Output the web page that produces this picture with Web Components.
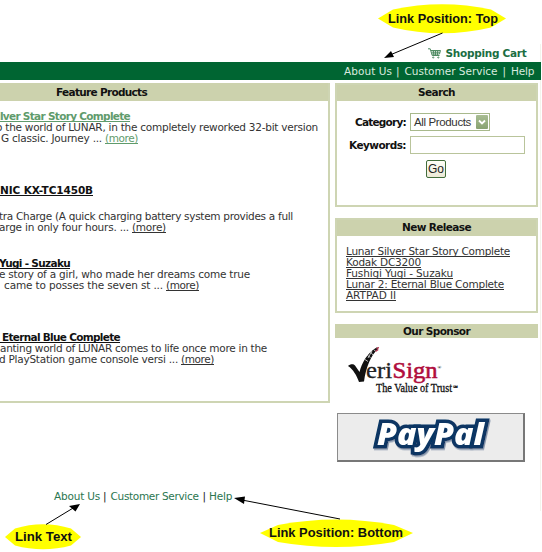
<!DOCTYPE html>
<html lang="en"><head><meta charset="utf-8"><title>Store</title>
<style>body{margin:0;background:#fff;overflow:hidden}</style></head><body>
<store-page></store-page>
<script>
const define=(name,html,after)=>customElements.define(name,class extends HTMLElement{
  connectedCallback(){
    if(this.shadowRoot)return;
    const t=document.createElement('template');t.innerHTML=html;
    this.attachShadow({mode:'open'}).append(t.content.cloneNode(true));
    if(after)after(this);
  }
});
// A run of text whose tracking is adjusted to fill width "w"; "x" is its leading space.
define('text-run',`<style>:host{display:block;flex:none;white-space:pre;line-height:inherit}
:host([b]){font-weight:bold;font-size:10.5px}:host([u]) span{text-decoration:underline;text-underline-offset:1px;text-decoration-thickness:1px;text-decoration-skip-ink:none}
span{display:inline-block}</style><span><slot></slot></span>`,el=>{
  const s=el.shadowRoot.querySelector('span'),x=el.getAttribute('x'),w=+el.getAttribute('w');
  if(x)el.style.marginLeft=x+'px';
  if(w){const n=el.textContent.length,cw=s.getBoundingClientRect().width;
    s.style.letterSpacing=((w-cw)/n)+'px';el.style.width=w+'px';}
});
define('text-line',`<style>:host{display:flex;height:11px;line-height:11px}</style><slot></slot>`);
define('product-item',`<style>:host{display:block}</style><slot></slot>`);
define('side-panel',`<style>:host{display:flex;flex-direction:column;box-sizing:border-box;border:2px solid #ced5b3;background:#fff}
header{background:#ccd2ad;height:16px;line-height:15px;font-weight:bold;color:#111;display:flex;justify-content:center;flex:none}
:host([flat]){border-width:0}:host([flat]) header{height:14px}</style>
<header><slot name="title"></slot></header><slot></slot>`);
define('cart-icon',`<style>:host{display:block;width:13px;height:11px}svg{display:block}</style>
<svg width="13" height="11" fill="none" stroke="#4f8b63" stroke-width="1"><path d="M0 .8h2.2l2 6.7h7.3M2.8 2.5h9.7l-1 3.5H4M5.3 2.5l.6 5M7.5 2.5v5M9.7 2.5l-.3 5M3.4 4.2H12"/><circle cx="5.2" cy="9.5" r=".6"/><circle cx="10.3" cy="9.5" r=".6"/></svg>`);
define('search-form',`<style>:host{display:grid;grid-template-columns:73px 116px;row-gap:5px;padding-top:12px;color:#111}
.l{display:flex;justify-content:flex-end;padding-right:4px;height:18px;line-height:18px}
.s{box-sizing:border-box;width:80px;height:18px;border:1px solid #a8b98c;display:flex;font:11.5px/16px "Liberation Sans",sans-serif;color:#333}
.s i{display:block;box-sizing:border-box;margin:1px 1px 0 auto;border-radius:1px;width:12px;height:14px;background:linear-gradient(#a9bd93,#87a271);flex:none}
svg{display:block}.k{box-sizing:border-box;width:115px;height:18px;border:1px solid #b9c49b}
button{grid-column:1/3;margin:1px 0 0 89px;box-sizing:border-box;width:20px;height:18px;padding:0;border:1px solid #426d3b;border-radius:2px;background:linear-gradient(#fffff8,#ece9d6);color:#222;font:12px/15px "Liberation Sans",sans-serif}</style>
<div class="l"><text-run b w="51">Category:</text-run></div><div class="s"><text-run x="3" w="57">All Products</text-run><i><svg width="12" height="14"><path d="M3 5.5l3 3 3-3" fill="none" stroke="#fff" stroke-width="1.8"/></svg></i></div>
<div class="l"><text-run b w="57">Keywords:</text-run></div><div class="k"></div><button>Go</button>`);
define('verisign-logo',`<style>:host{display:block;height:52px}svg{display:block}</style>
<svg width="140" height="52" font-family="Liberation Serif,serif"><path d="M13 19C15 17 18.500 16.500 20 18.500L24.500 25C27 16 32 6 42 .3L43.500 1.500C36 8 31 20 29 34.500L24 35C22 29 18 22 13 19Z" fill="#111"/>
<path d="M38.500 2.500L41.500 5M35.500 5L38 8M32.500 8.500L35.500 10.500M30 12.500L33 14.500M37 4L33 11" stroke="#fff" stroke-width=".7"/><path d="M41.500 2L43.800.2M40.500 4.500L43.300 2.500" stroke="#b83350" stroke-width="1.2"/>
<text x="31" y="31" font-size="23" textLength="26" lengthAdjust="spacingAndGlyphs" fill="#222" stroke="#222" stroke-width=".3">eri</text><text x="57.500" y="31" font-size="24" textLength="45" lengthAdjust="spacingAndGlyphs" fill="#b00d3d" stroke="#b00d3d" stroke-width=".6">Sign</text><text x="102.500" y="22" font-size="5" font-weight="bold">®</text>
<text x="41" y="45" font-size="11.5" textLength="76" lengthAdjust="spacingAndGlyphs" fill="#111" stroke="#111" stroke-width=".3">The Value of Trust</text><text x="117.500" y="43" font-size="6" font-weight="bold">℠</text></svg>`);
define('paypal-logo',`<style>:host{display:block;box-sizing:border-box;width:188px;height:49px;border:1px solid #8b8b8b;border-right:2px solid #777;border-bottom:2px solid #777;background:#ececec}svg{display:block}</style>
<svg width="185" height="46" font-family="Open Sans,Noto Sans,sans-serif" font-weight="800" font-style="italic" font-size="30"><defs><filter id="sh"><feDropShadow dx="1" dy="1.500" stdDeviation=".6" flood-color="#8998ad"/></filter></defs><text x="39" y="31" textLength="107" lengthAdjust="spacingAndGlyphs" fill="#fff" stroke="#073563" stroke-width="7" paint-order="stroke" filter="url(#sh)">PayPal</text></svg>`);
define('call-outs',`<style>:host{position:absolute;inset:0;pointer-events:none}svg{display:block}</style>
<svg width="542" height="552" font-family="Liberation Sans,sans-serif" font-weight="bold" font-size="13.5"><g fill="#ff0">
<path d="M378 18.5L393 9.500Q442-1 491 9.500L506 18.500 491 27.500Q442 39 393 27.500Z"/>
<path d="M5 537L15 528.500Q43 520 71 528.500L81 537 71 545.500Q43 553 15 545.500Z"/>
<path d="M260 533L278 525Q336 514 394 525L413 533 394 542Q336 552 278 542Z"/></g>
<g stroke="#000"><path d="M442.500 33L390 55M46 524.500L74 507.500M340 519L242 500"/></g>
<path d="M384 58L391 51 394 57ZM80 504L75.500 511.500 69 506ZM234 498L245 496.500 244 504Z"/>
<g fill="#111"><text x="388" y="23" textLength="110" lengthAdjust="spacingAndGlyphs">Link Position: Top</text><text x="15" y="541" textLength="57" lengthAdjust="spacingAndGlyphs">Link Text</text><text x="269" y="537" textLength="134" lengthAdjust="spacingAndGlyphs">Link Position: Bottom</text></g></svg>`);
define('store-page',`<style>
:host{display:block;position:relative;width:542px;height:552px;overflow:hidden;font:10.5px/11px "DejaVu Sans",Verdana,sans-serif;color:#333}
.page{box-sizing:border-box;width:541px;height:511px;padding-top:44px;background:linear-gradient(#f3f4ec,#f3f4ec) 540px 44px/1px 467px no-repeat}
.cart{display:flex;height:18px;padding:3px 0 0 428px;box-sizing:border-box;color:#1b6e42;line-height:13px;gap:4.5px}
cart-icon{margin-top:1px}
nav{display:flex;height:18px;line-height:19px;background:#006532;color:#d8eadf}
.cols{display:flex;margin-top:3px;height:380px}
.main{box-sizing:border-box;width:330px;height:320px;border-right:2px solid #ced5b3;border-bottom:2px solid #ced5b3;overflow:hidden}
.main h2{margin:0 -2px 0 0;height:18px;background:#ccd2ad;font-size:11px;line-height:19px;color:#111}
aside{width:203px;margin-left:5px}
.items{padding-top:10px}
product-item{margin-bottom:41px}product-item.b{margin-bottom:25px}
.gap{height:15px}.t{color:#111}.g{color:#5f9b6c}
.foot{display:flex;height:14px;line-height:14px;margin-top:26px;color:#2b7650}.k{color:#222}
</style>
<div class="page">
<div class="cart"><cart-icon></cart-icon><text-run b w="81">Shopping Cart</text-run></div>
<nav><text-run x="344" w="48">About Us</text-run><text-run x="4">|</text-run><text-run x="5" w="93">Customer Service</text-run><text-run x="5">|</text-run><text-run x="5" w="23">Help</text-run></nav>
<div class="cols">
<section class="main"><h2><text-run b x="56" w="91">Feature Products</text-run></h2>
<div class="items">
<product-item><text-line class="g"><text-run b u x="-3" w="133">ilver Star Story Complete</text-run></text-line><text-line><text-run x="-4" w="322">o the world of LUNAR, in the completely reworked 32-bit version</text-run></text-line><text-line><text-run x="1" w="101">G classic. Journey ...</text-run><text-run class="g" u x="3" w="33">(more)</text-run></text-line></product-item>
<product-item class="b"><text-line class="t"><text-run b u x="0" w="93">NIC KX-TC1450B</text-run></text-line><div class="gap"></div><text-line><text-run x="-1" w="294">tra Charge (A quick charging battery system provides a full</text-run></text-line><text-line><text-run x="-1" w="130">arge in only four hours. ...</text-run><text-run u x="3" w="34">(more)</text-run></text-line></product-item>
<product-item><text-line class="t"><text-run b u x="-1" w="71">Yugi - Suzaku</text-run></text-line><text-line><text-run x="-1" w="251">e story of a girl, who made her dreams come true</text-run></text-line><text-line><text-run x="4" w="159">came to posses the seven st ...</text-run><text-run u x="3" w="33">(more)</text-run></text-line></product-item>
<product-item><text-line class="t"><text-run b u x="-1" w="121"> Eternal Blue Complete</text-run></text-line><text-line><text-run x="0" w="267">anting world of LUNAR comes to life once more in the</text-run></text-line><text-line><text-run x="-1" w="179">d PlayStation game console versi ...</text-run><text-run u x="3" w="33">(more)</text-run></text-line></product-item>
</div></section>
<aside>
<side-panel style="height:124px"><text-run b slot="title" w="37">Search</text-run><search-form></search-form></side-panel>
<side-panel style="height:95px;margin-top:11px"><text-run b slot="title" w="69">New Release</text-run>
<div style="padding:10px 0 0 9px"><text-line><text-run u w="164">Lunar Silver Star Story Complete</text-run></text-line><text-line><text-run u w="75">Kodak DC3200</text-run></text-line><text-line><text-run u w="107">Fushigi Yugi - Suzaku</text-run></text-line><text-line><text-run u w="158">Lunar 2: Eternal Blue Complete</text-run></text-line><text-line><text-run u w="50">ARTPAD II</text-run></text-line></div></side-panel>
<side-panel flat style="margin-top:11px"><text-run b slot="title" w="67">Our Sponsor</text-run>
<verisign-logo style="margin-top:9px"></verisign-logo><paypal-logo style="margin:14px 0 0 2px"></paypal-logo></side-panel>
</aside></div>
<div class="foot"><text-run x="54" w="46">About Us</text-run><text-run class="k" x="3">|</text-run><text-run x="4" w="88">Customer Service</text-run><text-run class="k" x="4">|</text-run><text-run x="3" w="23">Help</text-run></div>
</div><call-outs></call-outs>`);
</script></body></html>
